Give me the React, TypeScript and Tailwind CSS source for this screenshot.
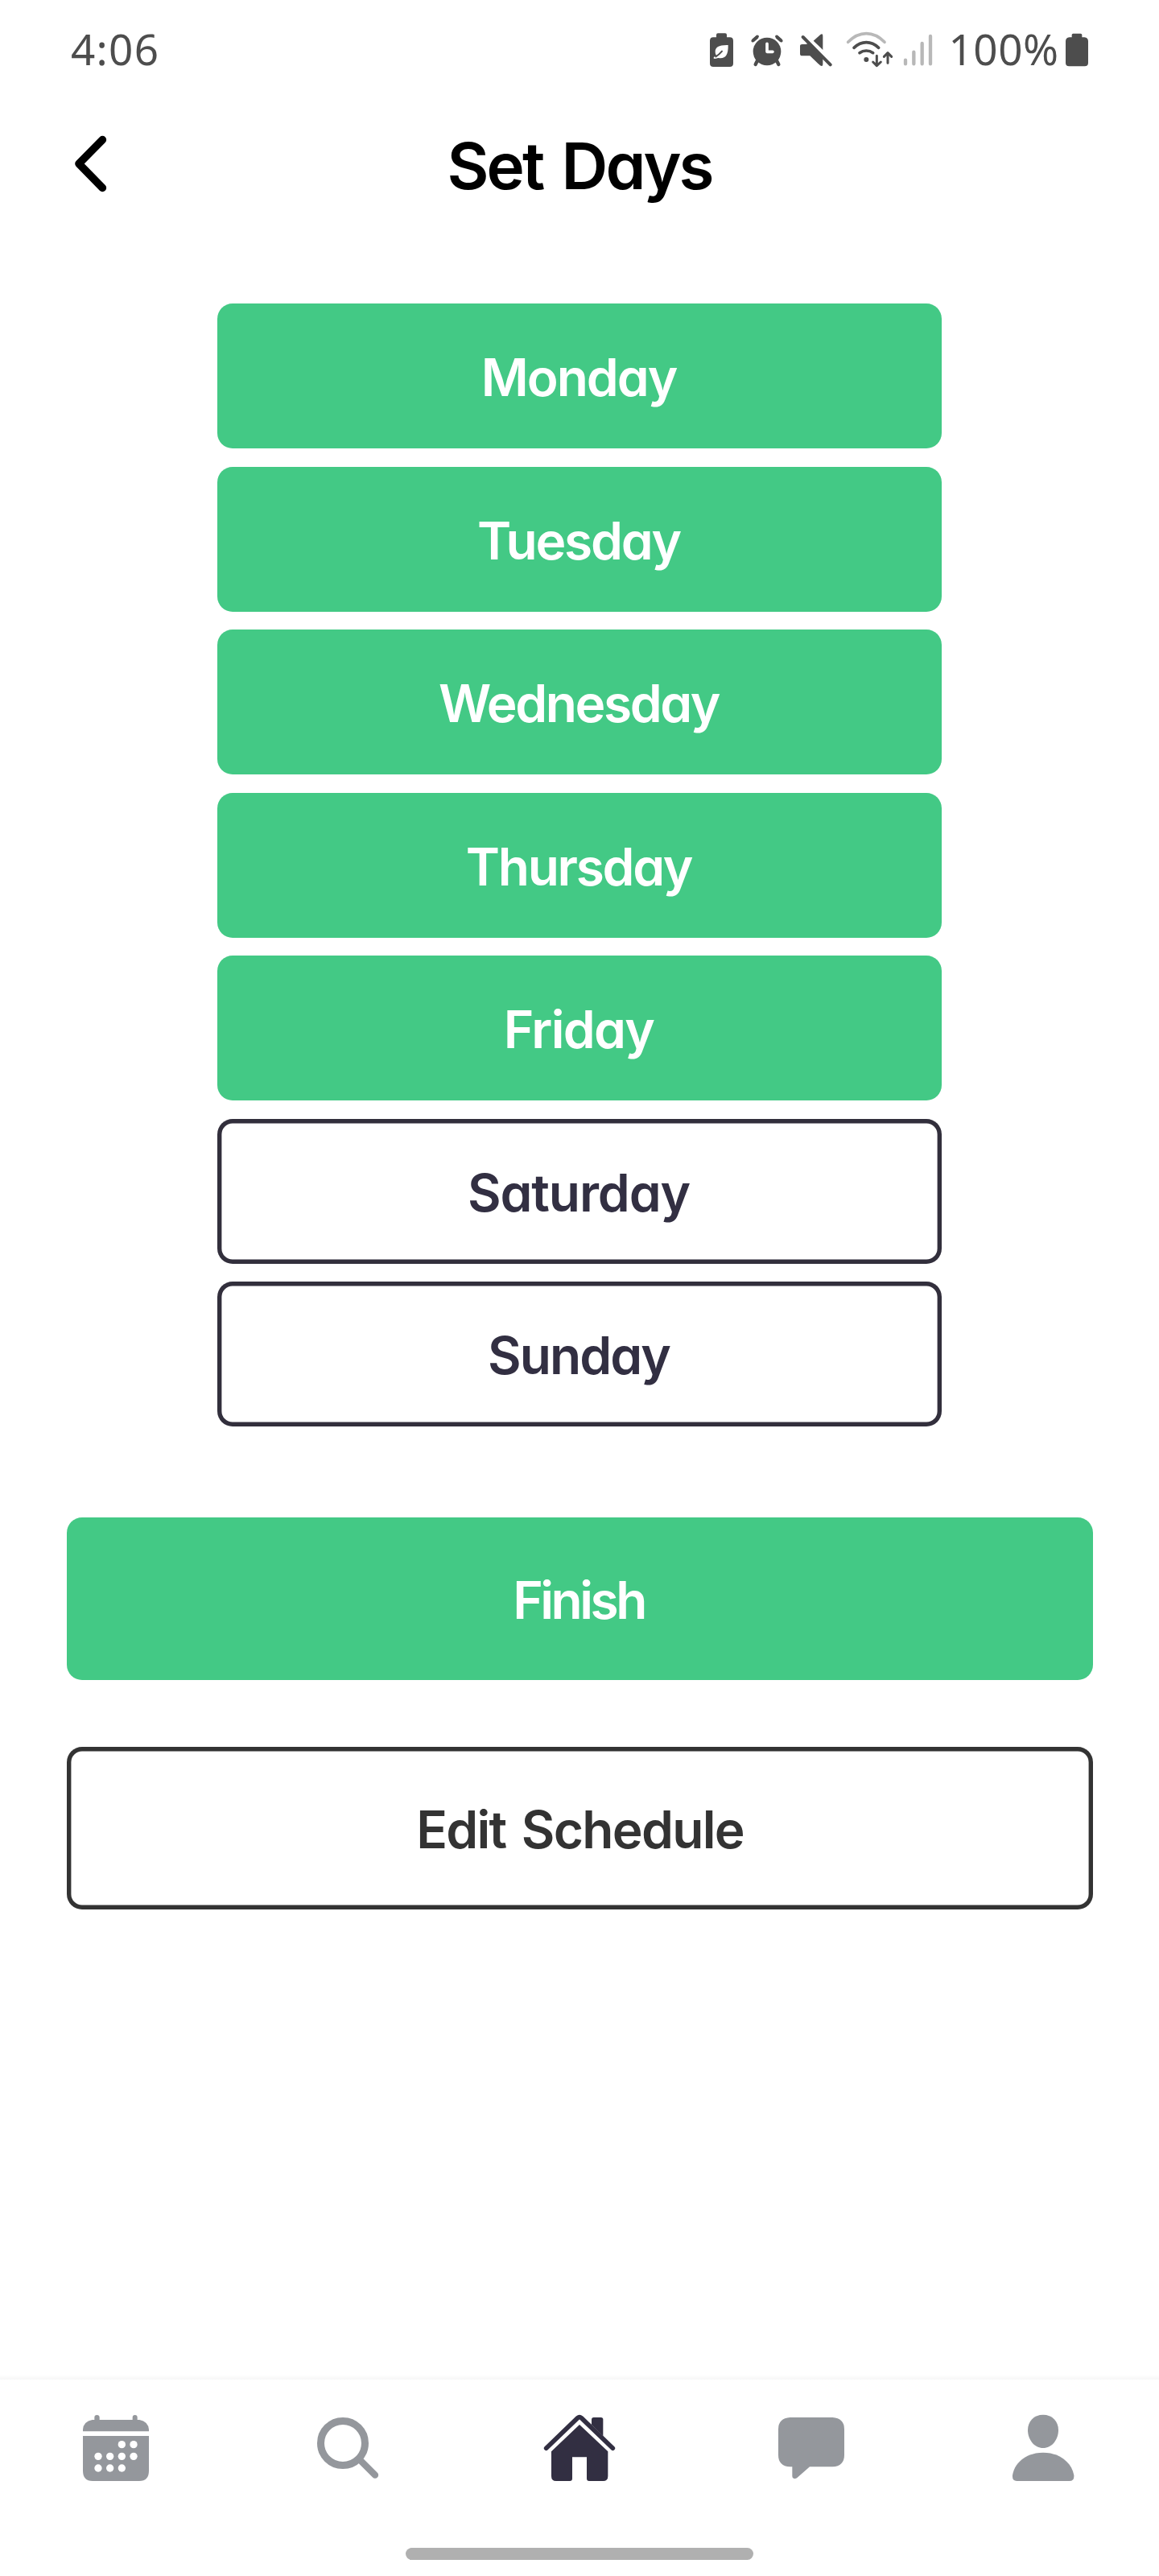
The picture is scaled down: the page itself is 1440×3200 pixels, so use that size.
import type { ReactNode } from "react";

type Day = { name: string; selected: boolean; tracking: string };

const days: Day[] = [
  { name: "Monday", selected: true, tracking: "tracking-[-2px]" },
  { name: "Tuesday", selected: true, tracking: "tracking-[-2.2px]" },
  { name: "Wednesday", selected: true, tracking: "tracking-[-2.4px]" },
  { name: "Thursday", selected: true, tracking: "tracking-[-2.3px]" },
  { name: "Friday", selected: true, tracking: "tracking-[-1.7px]" },
  { name: "Saturday", selected: false, tracking: "tracking-[-1.1px]" },
  { name: "Sunday", selected: false, tracking: "tracking-[-1.9px]" },
];

function StatusBar() {
  return (
    <div className="mt-5 flex h-[90px] items-center justify-between pr-[87px] pl-[88px] font-['Noto_Sans',sans-serif] text-[53px] leading-none text-[#4d4d4d]">
      <span className="pb-[10px] tracking-[1.3px]">4:06</span>
      <div className="flex items-center">
        {/* power saving battery */}
        <svg className="h-[90px] w-[31px]" viewBox="63 0 93 270" fill="currentColor">
          <path d="M90 79V70Q90 64 96 64H123Q129 64 129 70V79H140Q153 79 153 92V176Q153 189 140 189H79Q66 189 66 176V92Q66 79 79 79Z" />
          <path d="M134 108C100 107 86 116 86 132C86 140 88 144 91 148C84 152 80 152 80 156C80 160 85 159 98 156C122 160 135 148 134 108Z" fill="white" />
          <path d="M88 151Q99 145 111 131" fill="none" stroke="currentColor" strokeWidth="6" strokeLinecap="round" />
        </svg>
        {/* alarm */}
        <svg className="ml-[21px] h-[90px] w-[40px]" viewBox="219 0 120 270" fill="none" stroke="currentColor" strokeLinecap="round">
          <circle cx="279" cy="132" r="52" fill="currentColor" stroke="none" />
          <path d="M227 91 243 77M331 91 315 77" strokeWidth="12" strokeLinecap="butt" />
          <path d="M226 92 243 76M332 92 315 76" strokeWidth="11" />
          <path d="M242 168 236 180M316 168 322 180" strokeWidth="13" />
          <path d="M279 103V133H300" stroke="white" strokeWidth="11" strokeLinejoin="round" />
        </svg>
        {/* muted speaker */}
        <svg className="ml-[20px] h-[90px] w-[41px]" viewBox="399 0 123 270" fill="currentColor">
          <path d="M452 92 478 69Q487 63 487 74V126Z" />
          <path d="M402 112Q402 105 410 105H424L432 102 487 158V179Q487 190 477 184L439 148H410Q402 148 402 140Z" />
          <path d="M413 78 515 181" fill="none" stroke="currentColor" strokeWidth="12" strokeLinecap="round" />
        </svg>
        {/* wifi with traffic arrows */}
        <svg className="ml-[17px] h-[90px] w-[59px]" viewBox="573 0 177 270" fill="none" stroke="currentColor" strokeWidth="11" strokeLinecap="round" strokeLinejoin="round">
          <path d="M581 97Q612 65 649 65Q686 65 717 97" stroke="#b8b8b8" />
          <path d="M603 118Q624 98 649 98Q674 98 695 118" />
          <path d="M624 137Q635 129 649 129Q663 129 674 137" />
          <circle cx="649" cy="162" r="9" fill="currentColor" stroke="none" />
          <path d="M688 148V184M674 171 688 185 703 171M729 175V138M715 151 729 137 743 151" strokeWidth="9" />
        </svg>
        {/* signal strength */}
        <svg className="ml-[12px] h-[90px] w-[37px]" viewBox="786 0 111 270" fill="none" stroke="#b8b8b8" strokeWidth="13" strokeLinecap="round">
          <path d="M795 164V178M826 134V178M857 102V178M888 75V178" />
        </svg>
        <span className="ml-[12px] w-[152px] pb-[9px] text-center tracking-[0.5px]">100%</span>
        <svg className="h-[90px] w-[30px]" viewBox="1389 0 90 270" fill="currentColor">
          <path d="M1415 79V70Q1415 65 1420 65H1448Q1453 65 1453 70V79H1462Q1476 81 1476 94V174Q1476 187 1463 187H1405Q1392 187 1392 174V94Q1392 81 1406 79Z" />
        </svg>
      </div>
    </div>
  );
}

function Header() {
  return (
    <header className="grid h-[192px] grid-cols-[1fr_auto_1fr] items-center px-[90px]">
      <button aria-label="Back" className="w-[45px]">
        <svg className="h-[80px] w-[45px]" viewBox="90 438 135 240" fill="none" stroke="black" strokeWidth="29" strokeLinecap="round" strokeLinejoin="round">
          <path d="M202 461 114 550 202 640" />
        </svg>
      </button>
      <h1 className="text-[80px] leading-none font-semibold tracking-[-2.9px] text-black [word-spacing:6px]">Set Days</h1>
    </header>
  );
}

function NavItem({ label, viewBox, active = false, children }: { label: string; viewBox: string; active?: boolean; children: ReactNode }) {
  return (
    <button aria-label={label} className={active ? "flex justify-center text-[#322f42]" : "flex justify-center text-[#94979c]"}>
      <svg className="size-[100px]" viewBox={viewBox} fill="currentColor">
        {children}
      </svg>
    </button>
  );
}

const calendarDots = [
  [214, 320], [258, 320],
  [126, 364], [170, 364], [214, 364], [258, 364],
  [126, 408], [170, 408], [214, 408],
];

function BottomNav() {
  return (
    <nav className="mt-auto flex h-[250px] flex-col">
      <div className="h-[6px] bg-linear-to-b from-white to-[#f7f7f7]" />
      <div className="mt-[34px] grid grid-cols-5">
        <NavItem label="Calendar" viewBox="42 180 300 300">
          <path d="M69 271V264Q71 234 104 228H112V219Q112 210 121 210Q131 210 131 219V228H254V219Q254 210 263 210Q272 210 272 219V228H280Q312 234 315 264V271Z" />
          <path d="M69 288H315V418Q315 456 279 456H105Q69 456 69 418Z" />
          {calendarDots.map(([cx, cy]) => (
            <circle key={`${cx}-${cy}`} cx={cx} cy={cy} r="14" fill="white" />
          ))}
        </NavItem>
        <NavItem label="Search" viewBox="906 180 300 300">
          <circle cx="1038" cy="315" r="82.5" fill="none" stroke="currentColor" strokeWidth="27" />
          <path d="M1104 380 1158 434" fill="none" stroke="currentColor" strokeWidth="25" strokeLinecap="round" />
        </NavItem>
        <NavItem label="Home" viewBox="90 180 300 300" active>
          <path d="M285 246V227Q285 219 293 219H320Q328 219 328 227V288Z" />
          <path d="M116 334 233 221Q240 215 247 221L364 334" fill="none" stroke="currentColor" strokeWidth="17" strokeLinecap="round" />
          <path d="M240 246 346 346V438Q346 456 328 456H276Q267 456 267 447V367H213V447Q213 456 204 456H153Q135 456 135 438V346Z" />
        </NavItem>
        <NavItem label="Messages" viewBox="954 180 300 300">
          <path d="M1025 219H1183Q1227 222 1227 263V359Q1227 400 1183 403H1098L1051 444Q1045 449 1038 446Q1033 444 1033 438V403H1025Q981 400 981 359V263Q981 222 1025 219Z" />
        </NavItem>
        <NavItem label="Profile" viewBox="138 180 300 300">
          <path d="M288 209C322 209 345 233 345 266C345 302 320 333 288 333C256 333 231 302 231 266C231 233 254 209 288 209Z" />
          <path d="M288 350C347 350 393 384 403 434Q405 456 386 456H190Q172 456 174 434C183 384 229 350 288 350Z" />
        </NavItem>
      </div>
      <div className="mx-auto mt-[75px] h-[15px] w-[432px] rounded-full bg-[#b0b0b0]" />
    </nav>
  );
}

export default function App() {
  return (
    <div className="flex h-[3200px] w-[1440px] flex-col overflow-hidden bg-white font-['Inter',sans-serif] [font-feature-settings:'cv11']">
      <StatusBar />
      <Header />
      <main className="flex flex-col items-center pr-[82px] pl-[83px] pt-[75px] text-[64px] leading-none font-semibold">
        <div className="mr-px flex w-[900px] flex-col gap-[22.5px]">
          {days.map((day) => (
            <button
              key={day.name}
              className={`flex h-[180px] items-center justify-center rounded-[19px] pt-[4px] pr-[2px] ${day.tracking} ${
                day.selected ? "bg-[#43c985] text-white" : "text-[#322f42] shadow-[inset_0_0_0_5.4px_#322f3c]"
              }`}
            >
              {day.name}
            </button>
          ))}
        </div>
        <button className="mt-[112.5px] flex h-[202px] w-full items-center justify-center rounded-[19px] bg-[#43c985] pt-[4px] pr-[3px] tracking-[-3.5px] text-white">
          Finish
        </button>
        <button className="mt-[83.5px] flex h-[202px] w-full items-center justify-center rounded-[19px] pt-[4px] tracking-[-1.7px] text-[#333333] shadow-[inset_0_0_0_5.4px_#333333] [word-spacing:5px]">
          Edit Schedule
        </button>
      </main>
      <BottomNav />
    </div>
  );
}
